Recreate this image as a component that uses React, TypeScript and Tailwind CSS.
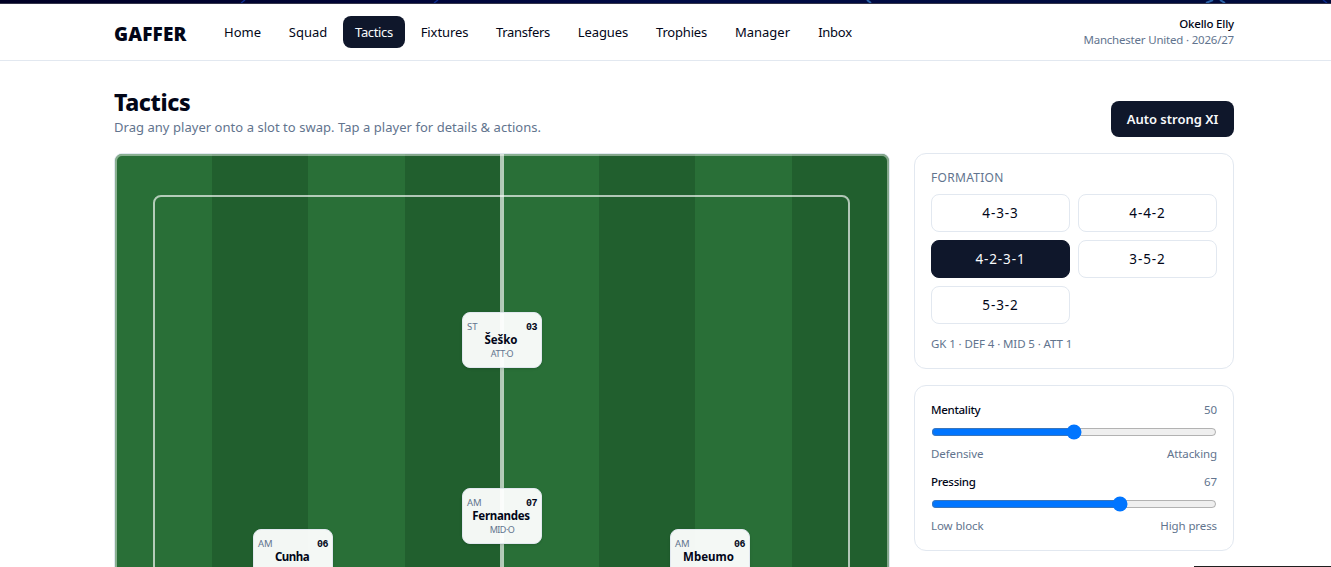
import React, { useState } from 'react'
import clsx from 'clsx'

interface IPlayer {
  name: string
  nameClass: string
  role: string
  duty: string
  rating: string
  position: string
}

const navItems = [
  { label: 'Home', className: 'w-[61px]' },
  { label: 'Squad', className: 'w-[62px]' },
  { label: 'Tactics', className: 'w-[62px] tracking-[-0.35px]' },
  { label: 'Fixtures', className: 'w-[71px] tracking-[-0.1px]' },
  { label: 'Transfers', className: 'w-[78px] tracking-[-0.3px]' },
  { label: 'Leagues', className: 'w-[74px] tracking-[-0.1px]' },
  { label: 'Trophies', className: 'w-[75px] tracking-[-0.2px]' },
  { label: 'Manager', className: 'w-[79px]' },
  { label: 'Inbox', className: 'w-[58px] tracking-[-0.25px]' }
]

const formations = ['4-3-3', '4-4-2', '4-2-3-1', '3-5-2', '5-3-2']

const players: IPlayer[] = [
  {
    name: 'Šeško',
    nameClass: 'tracking-[-0.1px]',
    role: 'ST',
    duty: 'ATT·O',
    rating: '03',
    position: 'left-[347px] top-[158px]'
  },
  {
    name: 'Fernandes',
    nameClass: 'tracking-[-0.3px]',
    role: 'AM',
    duty: 'MID·O',
    rating: '07',
    position: 'left-[347px] top-[334px]'
  },
  {
    name: 'Cunha',
    nameClass: 'tracking-[-0.5px]',
    role: 'AM',
    duty: 'MID·O',
    rating: '06',
    position: 'left-[138px] top-[375px]'
  },
  {
    name: 'Mbeumo',
    nameClass: '-ml-px',
    role: 'AM',
    duty: 'MID·O',
    rating: '06',
    position: 'left-[555px] top-[375px]'
  }
]

const PlayerCard = ({ player }: { player: IPlayer }) => (
  <div
    className={clsx(
      'absolute h-14 w-20 rounded-lg border border-slate-200 bg-white/95 px-1 pt-[7px] text-center shadow-sm',
      player.position
    )}
  >
    <div className="flex h-[13px] items-center justify-between leading-[13px]">
      <span className="text-[9.5px] text-slate-500">{player.role}</span>
      <span className="pt-px font-['Liberation_Mono'] text-[10px] font-bold tracking-[-0.5px]">
        {player.rating}
      </span>
    </div>
    <div
      className={clsx(
        'h-[14px] pr-0.5 text-[11.5px] leading-[13px] font-bold whitespace-nowrap',
        player.nameClass
      )}
    >
      {player.name}
    </div>
    <div className="text-[9px] leading-[14px] tracking-[-0.5px] text-slate-500">
      {player.duty}
    </div>
  </div>
)

const Pitch = () => (
  <div className="h-[1000px] rounded-lg border border-slate-200">
    <div className="relative h-full overflow-hidden rounded-[7px]">
      <div className="grid h-full grid-cols-[97px_96px_97px_97px_97px_96px_97px_97px]">
        {Array.from({ length: 8 }, (_, index) => (
          <div
            key={index}
            className={index % 2 === 0 ? 'bg-[#296f37]' : 'bg-[#215f2e]'}
          />
        ))}
      </div>
      <div className="absolute inset-y-0 left-[385px] w-1 bg-white/65" />
      <div className="absolute inset-0 rounded-[7px] border-2 border-white/45" />
      <div className="absolute top-[41px] right-[39px] bottom-10 left-[38px] rounded-lg border-2 border-white/65" />
      {players.map((player) => (
        <PlayerCard key={player.name} player={player} />
      ))}
    </div>
  </div>
)

interface ISliderProps {
  label: string
  low: string
  high: string
  initial: number
}

const TacticSlider = ({ label, low, high, initial }: ISliderProps) => {
  const [value, setValue] = useState(initial)

  return (
    <div className="text-[11.5px] leading-4 tracking-[-0.1px]">
      <div className="flex justify-between">
        <span className="font-medium tracking-[-0.3px]">{label}</span>
        <span className="text-slate-500">{value}</span>
      </div>
      <input
        type="range"
        min={0}
        max={100}
        value={value}
        onChange={(e) => setValue(Number(e.target.value))}
        className="my-1.5 block h-4 w-full"
      />
      <div className="flex justify-between text-slate-500">
        <span>{low}</span>
        <span>{high}</span>
      </div>
    </div>
  )
}

const App = () => {
  const [formation, setFormation] = useState('4-2-3-1')

  return (
    <div className="relative h-[567px] overflow-hidden bg-white font-['Noto_Sans',sans-serif] text-slate-950">
      <div className="h-1 border-b border-[#34344a] bg-linear-to-r from-[#000024] via-[#000a45] to-[#000a3a]">
        <svg className="block h-[3px] w-full" viewBox="0 0 1331 3">
          <path
            d="M241 3l4-3M434 3l4-3M1323 0l4 3"
            stroke="#0a2a8c"
            strokeWidth="1.5"
          />
          <path
            d="M867 0l4 3M1206 3l7-3M1220 0l5 3"
            stroke="#2a62a8"
            strokeWidth="2"
          />
        </svg>
      </div>
      <header className="h-[57px] border-b border-slate-200">
        <div className="ml-[114px] flex h-14 w-[1120px] items-center">
          <div className="w-[98px] pt-1 text-[19px] font-black tracking-[0.15px]">
            GAFFER
          </div>
          <nav className="flex gap-1">
            {navItems.map((item) => (
              <a
                key={item.label}
                href="#"
                className={clsx(
                  'flex h-8 items-center justify-center rounded-lg pt-0.5 text-[13px] whitespace-nowrap',
                  item.className,
                  item.label === 'Tactics' && 'bg-slate-900 text-slate-50'
                )}
              >
                {item.label}
              </a>
            ))}
          </nav>
          <div className="ml-auto text-right text-[11.5px] leading-4">
            <div className="font-medium tracking-[-0.2px]">Okello Elly</div>
            <div className="tracking-[-0.2px] text-slate-500">
              Manchester United · 2026/27
            </div>
          </div>
        </div>
      </header>

      <main className="ml-[114px] w-[1120px] pt-6">
        <div className="flex items-end justify-between">
          <div>
            <h1 className="h-8 pt-px text-[23px] leading-8 font-extrabold tracking-[-0.4px]">
              Tactics
            </h1>
            <p className="text-[13px] leading-5 tracking-[0.04px] text-slate-500">
              Drag any player onto a slot to swap. Tap a player for details
              &amp; actions.
            </p>
          </div>
          <button className="h-9 w-[123px] rounded-lg bg-slate-900 pt-0.5 text-[13px] font-semibold whitespace-nowrap text-slate-50">
            Auto strong XI
          </button>
        </div>

        <div className="mt-4 grid grid-cols-[1fr_320px] items-start gap-6">
          <Pitch />
          <div className="flex flex-col gap-4">
            <section className="rounded-xl border border-slate-200 p-4">
              <div className="text-xs tracking-wide text-slate-500 uppercase">
                Formation
              </div>
              <div className="mt-2 grid grid-cols-2 gap-2">
                {formations.map((item) => (
                  <button
                    key={item}
                    onClick={() => setFormation(item)}
                    className={clsx(
                      'h-[38px] rounded-lg border text-[13.5px] tracking-[0.9px]',
                      item === formation
                        ? 'border-slate-900 bg-slate-900 text-slate-50'
                        : 'border-slate-200'
                    )}
                  >
                    {item}
                  </button>
                ))}
              </div>
              <div className="mt-3 text-[11.5px] leading-4 tracking-[-0.1px] text-slate-500">
                GK 1 · DEF 4 · MID 5 · ATT 1
              </div>
            </section>
            <section className="flex flex-col gap-3 rounded-xl border border-slate-200 p-4">
              <TacticSlider
                label="Mentality"
                low="Defensive"
                high="Attacking"
                initial={50}
              />
              <TacticSlider
                label="Pressing"
                low="Low block"
                high="High press"
                initial={67}
              />
            </section>
          </div>
        </div>
      </main>
      <div className="absolute right-0 bottom-0 h-px w-[137px] bg-[#1f1f1f]" />
    </div>
  )
}

export default App
